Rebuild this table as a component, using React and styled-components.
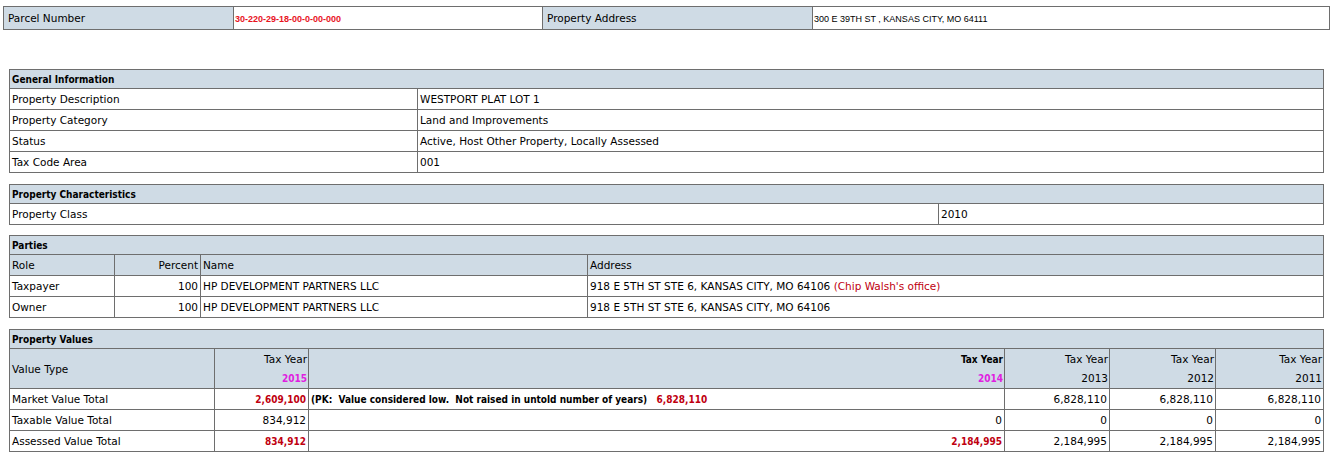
import React from "react";
import styled, { createGlobalStyle } from "styled-components";

const GlobalStyle = createGlobalStyle`
  body {
    margin: 0;
    background: #ffffff;
    font-family: "DejaVu Sans", Verdana, sans-serif;
    font-size: 10.5px;
    color: #000;
  }
`;

const Page = styled.div`
  padding: 6px 0 0 3px;
  width: 1330px;
`;

const TopTable = styled.table`
  border-collapse: collapse;
  table-layout: fixed;
  width: 1326px;
  border: 1px solid #6e6e6e;
  margin-bottom: 39px;
`;

const TopLabel = styled.td`
  background: #cfdbe5;
  border: 1px solid #6e6e6e;
  padding: 1px 4px 0;
  height: 21px;
  line-height: 21px;
  font-size: 10.5px;
  white-space: nowrap;
`;

const TopValue = styled.td`
  border: 1px solid #6e6e6e;
  padding: 1px 1px 0;
  height: 21px;
  font-family: "Liberation Sans", Arial, sans-serif;
  font-size: 9px;
  font-weight: ${(p) => (p.$red ? "bold" : "normal")};
  color: ${(p) => (p.$red ? "#e8141e" : "#000")};
  white-space: nowrap;
`;

const Sections = styled.div`
  display: flex;
  flex-direction: column;
  gap: 11px;
  padding-left: 6px;
`;

const Section = styled.table`
  border-collapse: collapse;
  table-layout: fixed;
  width: 1314px;
  border: 1px solid #6e6e6e;
  margin-top: ${(p) => (p.$pull ? "-1px" : "0")};
`;

const Col = styled.col`
  width: ${(p) => p.$w}px;
`;

const Head = styled.th`
  background: #cfdbe5;
  border: 1px solid #6e6e6e;
  text-align: left;
  font-weight: bold;
  font-stretch: condensed;
  font-size: 10px;
  padding: 1px 2px 0;
  height: 17px;
  line-height: 17px;
`;

const Cell = styled.td`
  border: 1px solid #6e6e6e;
  padding: 1px 2px 0;
  height: 19px;
  line-height: 19px;
  text-align: ${(p) => p.$align || "left"};
  background: ${(p) => (p.$shade ? "#cfdbe5" : "#fff")};
  font-weight: ${(p) => (p.$bold ? "bold" : "normal")};
  font-stretch: ${(p) => (p.$bold ? "condensed" : "normal")};
  font-size: ${(p) => (p.$bold ? "10px" : "10.5px")};
  color: ${(p) => (p.$red ? "#c00010" : "#000")};
  white-space: ${(p) => (p.$pre ? "pre" : "nowrap")};
  overflow: hidden;
`;

const YearHead = styled.td`
  background: #cfdbe5;
  border: 1px solid #6e6e6e;
  padding: 1px 1px 0 2px;
  height: 38px;
  line-height: 19px;
  text-align: ${(p) => p.$align || "right"};
  vertical-align: middle;
  font-weight: ${(p) => (p.$bold ? "bold" : "normal")};
  font-stretch: ${(p) => (p.$bold ? "condensed" : "normal")};
  font-size: ${(p) => (p.$bold ? "10px" : "10.5px")};
`;

const Line = styled.div``;

const Year = styled.div`
  color: ${(p) => (p.$hot ? "#e020e0" : "#000")};
  font-weight: ${(p) => (p.$hot ? "bold" : "normal")};
  font-stretch: ${(p) => (p.$hot ? "condensed" : "normal")};
  font-size: ${(p) => (p.$hot ? "10px" : "10.5px")};
`;

const Note = styled.span`
  color: #c00010;
`;

const Red = styled.span`
  color: #c00010;
`;

const general = [
  ["Property Description", "WESTPORT PLAT LOT 1"],
  ["Property Category", "Land and Improvements"],
  ["Status", "Active, Host Other Property, Locally Assessed"],
  ["Tax Code Area", "001"],
];

const parties = [
  ["Taxpayer", "100", "HP DEVELOPMENT PARTNERS LLC", "918 E 5TH ST STE 6, KANSAS CITY, MO 64106", "(Chip Walsh's office)"],
  ["Owner", "100", "HP DEVELOPMENT PARTNERS LLC", "918 E 5TH ST STE 6, KANSAS CITY, MO 64106", null],
];

const years = ["2013", "2012", "2011"];

const App = () => {
  return (
    <Page>
      <GlobalStyle />
      <TopTable>
        <colgroup>
          <Col $w={230} />
          <Col $w={309} />
          <Col $w={270} />
          <Col $w={517} />
        </colgroup>
        <tbody>
          <tr>
            <TopLabel>Parcel Number</TopLabel>
            <TopValue $red>30-220-29-18-00-0-00-000</TopValue>
            <TopLabel>Property Address</TopLabel>
            <TopValue>300 E 39TH ST , KANSAS CITY, MO 64111</TopValue>
          </tr>
        </tbody>
      </TopTable>

      <Sections>
        <Section>
          <colgroup>
            <Col $w={408} />
            <Col $w={906} />
          </colgroup>
          <tbody>
            <tr>
              <Head colSpan={2}>General Information</Head>
            </tr>
            {general.map(([k, v]) => (
              <tr key={k}>
                <Cell>{k}</Cell>
                <Cell>{v}</Cell>
              </tr>
            ))}
          </tbody>
        </Section>

        <Section>
          <colgroup>
            <Col $w={929} />
            <Col $w={385} />
          </colgroup>
          <tbody>
            <tr>
              <Head colSpan={2}>Property Characteristics</Head>
            </tr>
            <tr>
              <Cell>Property Class</Cell>
              <Cell>2010</Cell>
            </tr>
          </tbody>
        </Section>

        <Section $pull>
          <colgroup>
            <Col $w={105} />
            <Col $w={86} />
            <Col $w={387} />
            <Col $w={736} />
          </colgroup>
          <tbody>
            <tr>
              <Head colSpan={4}>Parties</Head>
            </tr>
            <tr>
              <Cell $shade>Role</Cell>
              <Cell $shade $align="right">Percent</Cell>
              <Cell $shade>Name</Cell>
              <Cell $shade>Address</Cell>
            </tr>
            {parties.map(([role, pct, name, addr, note]) => (
              <tr key={role}>
                <Cell>{role}</Cell>
                <Cell $align="right">{pct}</Cell>
                <Cell>{name}</Cell>
                <Cell>
                  {addr}
                  {note && <Note> {note}</Note>}
                </Cell>
              </tr>
            ))}
          </tbody>
        </Section>

        <Section>
          <colgroup>
            <Col $w={205} />
            <Col $w={94} />
            <Col $w={696} />
            <Col $w={105} />
            <Col $w={106} />
            <Col $w={108} />
          </colgroup>
          <tbody>
            <tr>
              <Head colSpan={6}>Property Values</Head>
            </tr>
            <tr>
              <YearHead $align="left">Value Type</YearHead>
              <YearHead>
                <Line>Tax Year</Line>
                <Year $hot>2015</Year>
              </YearHead>
              <YearHead $bold>
                <Line>Tax Year</Line>
                <Year $hot>2014</Year>
              </YearHead>
              {years.map((y) => (
                <YearHead key={y}>
                  <Line>Tax Year</Line>
                  <Year>{y}</Year>
                </YearHead>
              ))}
            </tr>
            <tr>
              <Cell>Market Value Total</Cell>
              <Cell $align="right" $bold $red>2,609,100</Cell>
              <Cell $bold $pre>
                {"(PK:  Value considered low.  Not raised in untold number of years)   "}
                <Red>6,828,110</Red>
              </Cell>
              <Cell $align="right">6,828,110</Cell>
              <Cell $align="right">6,828,110</Cell>
              <Cell $align="right">6,828,110</Cell>
            </tr>
            <tr>
              <Cell>Taxable Value Total</Cell>
              <Cell $align="right">834,912</Cell>
              <Cell $align="right">0</Cell>
              <Cell $align="right">0</Cell>
              <Cell $align="right">0</Cell>
              <Cell $align="right">0</Cell>
            </tr>
            <tr>
              <Cell>Assessed Value Total</Cell>
              <Cell $align="right" $bold $red>834,912</Cell>
              <Cell $align="right" $bold $red>2,184,995</Cell>
              <Cell $align="right">2,184,995</Cell>
              <Cell $align="right">2,184,995</Cell>
              <Cell $align="right">2,184,995</Cell>
            </tr>
          </tbody>
        </Section>
      </Sections>
    </Page>
  );
};

export default App;
